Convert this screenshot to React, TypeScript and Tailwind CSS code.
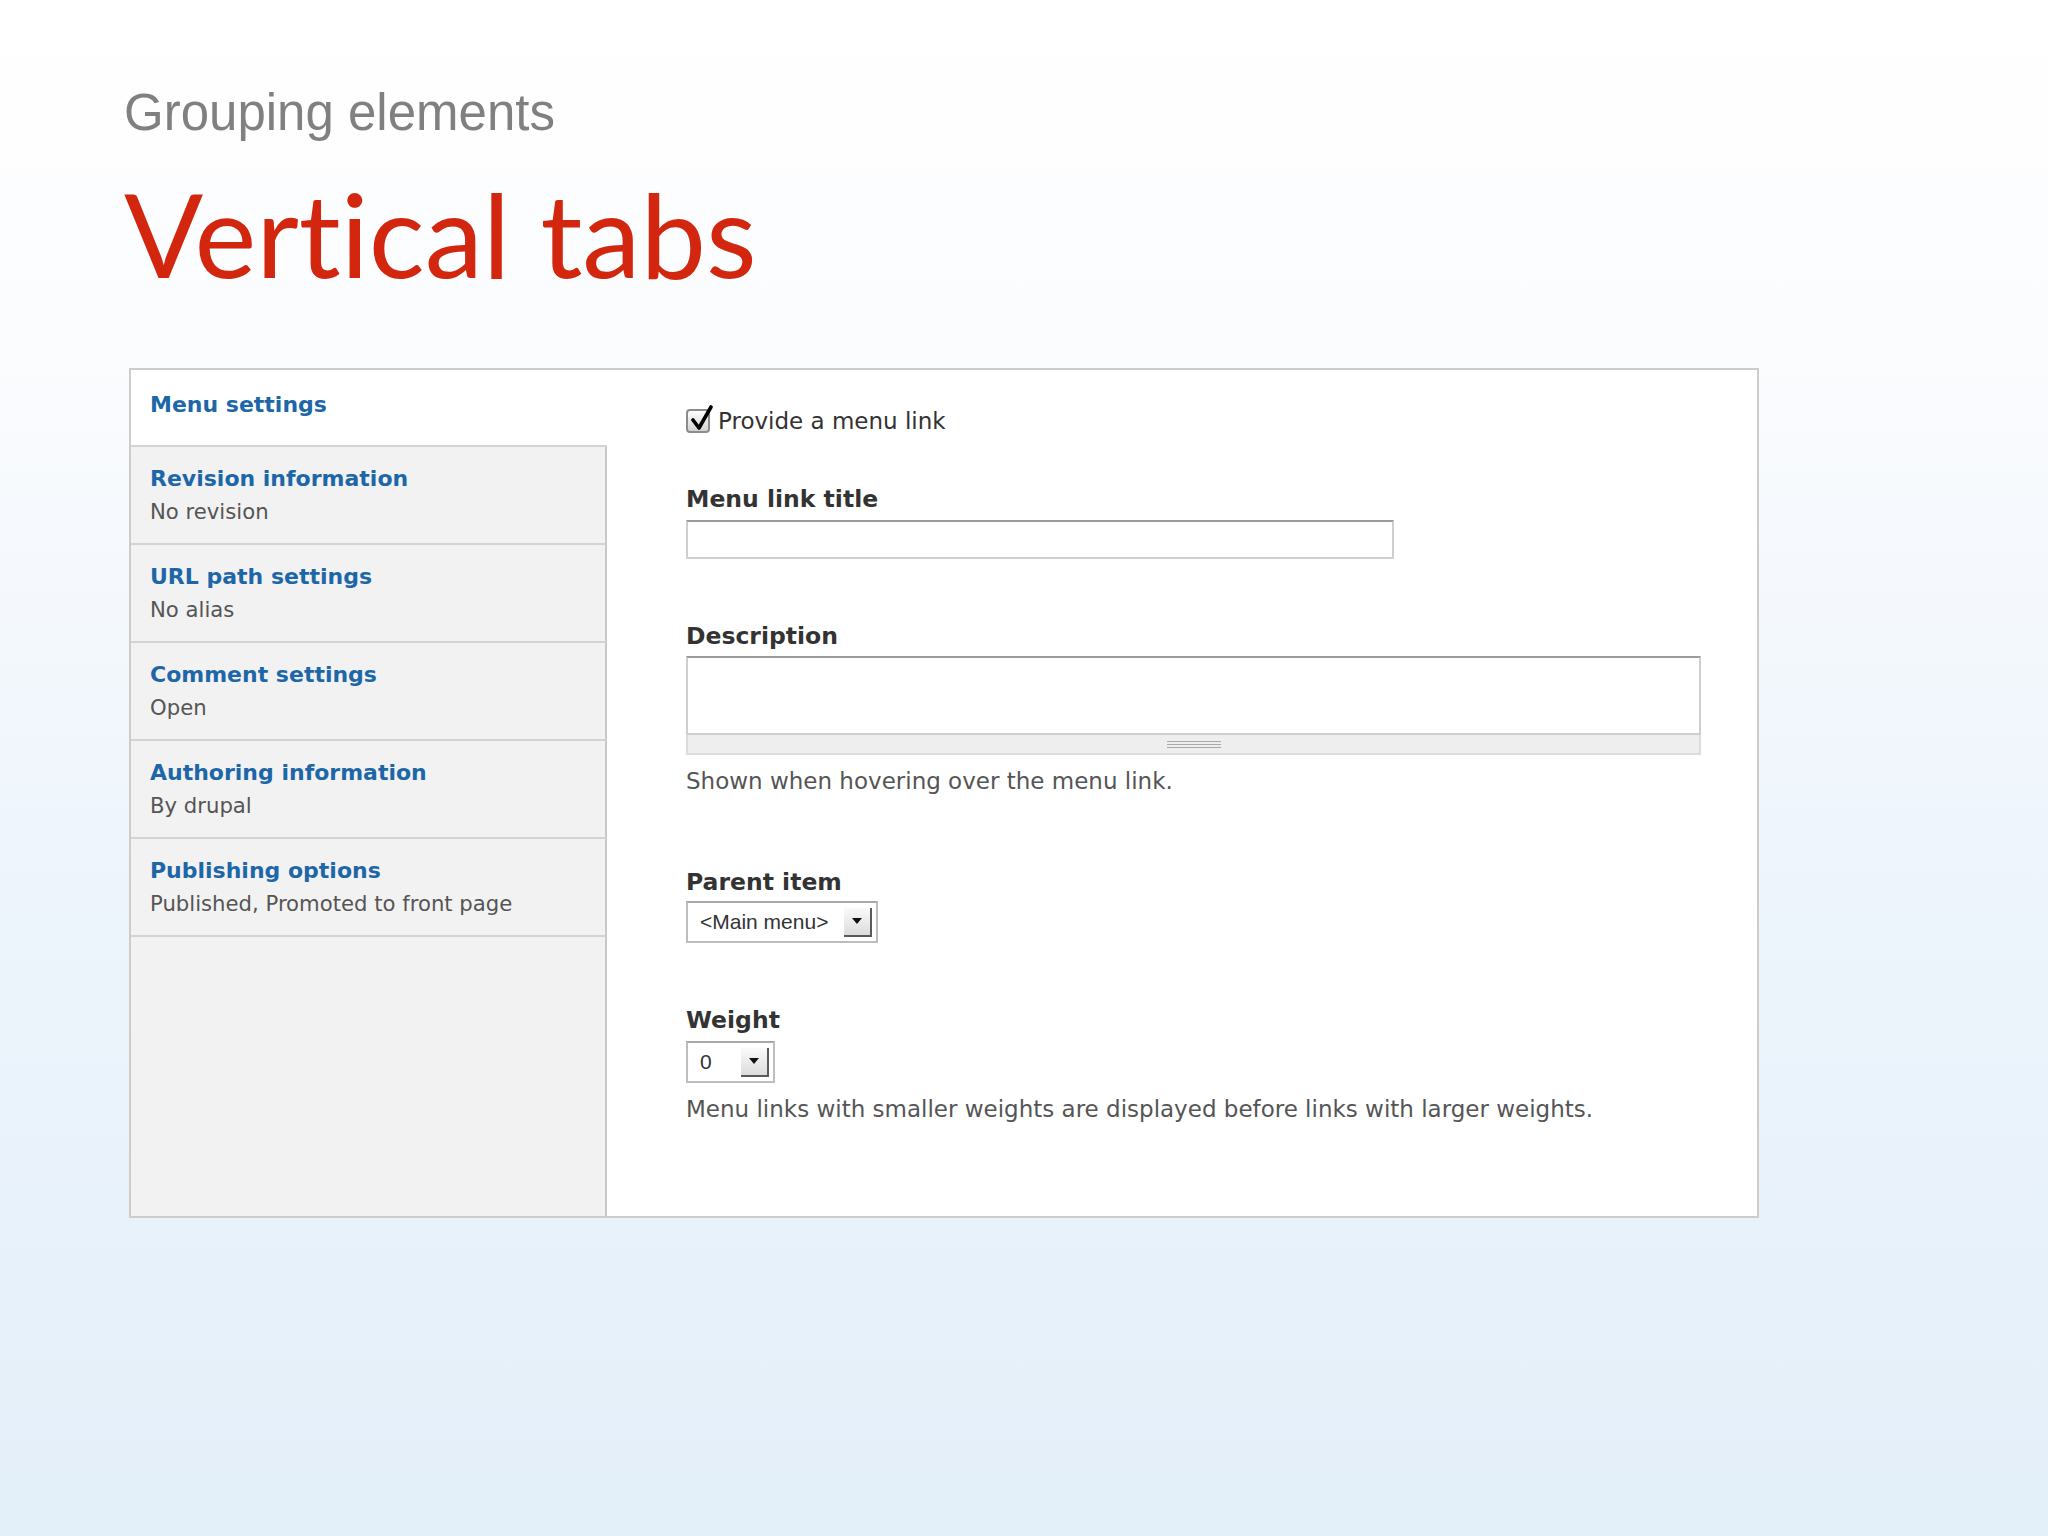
import React from "react";

const tabs = [
  { title: "Revision information", sub: "No revision" },
  { title: "URL path settings", sub: "No alias" },
  { title: "Comment settings", sub: "Open" },
  { title: "Authoring information", sub: "By drupal" },
  { title: "Publishing options", sub: "Published, Promoted to front page" },
];

function SelectBox({ label, width }: { label: string; width: string }) {
  return (
    <div
      className={`${width} h-[42px] flex items-center justify-between border-2 border-[#bdbdbd] border-t-[#a8a8a8] bg-white pl-[12px] pr-[4px]`}
    >
      <span className="font-['Liberation_Sans',Arial,sans-serif] text-[21px] text-[#333]">{label}</span>
      <span className="w-[28px] h-[29px] flex items-center justify-center bg-[linear-gradient(180deg,#fafafa_0%,#dcdcdc_100%)] border-r-2 border-b-2 border-[#5a5a5a]">
        <svg width="10" height="6" viewBox="0 0 10 6">
          <path d="M0 0H10L5 6Z" fill="#111" />
        </svg>
      </span>
    </div>
  );
}

export default function App() {
  return (
    <div className="w-[2048px] h-[1536px] bg-[linear-gradient(180deg,#ffffff_0%,#fbfcfe_22%,#eef5fc_55%,#e3eff9_100%)] pl-[124px] pt-[83px] font-['DejaVu_Sans',Verdana,sans-serif]">
      <h2 className="text-[51px] leading-[60px] text-[#808080] font-['Liberation_Sans',Arial,sans-serif]">
        Grouping elements
      </h2>
      <h1 className="mt-[31px] text-[117px] leading-[118px] text-[#d2260f] font-['Lato',sans-serif] [font-variant-ligatures:none]">
        Vertical tabs
      </h1>

      <div className="mt-[76px] ml-[5px] w-[1630px] h-[850px] border-2 border-[#cccccc] bg-white flex">
        {/* Sidebar */}
        <div className="w-[476px] flex flex-col">
          <div className="h-[77px] bg-white border-b-2 border-[#d3d3d3] pl-[19px] pt-[21px]">
            <div className="text-[22px] leading-[28px] font-bold text-[#1d67a8]">Menu settings</div>
          </div>
          {tabs.map((t) => (
            <div
              key={t.title}
              className="h-[98px] bg-[#f2f2f2] border-b-2 border-r-2 border-b-[#d3d3d3] border-r-[#c8c8c8] pl-[19px] pt-[18px]"
            >
              <div className="text-[22px] leading-[28px] font-bold text-[#1d67a8]">{t.title}</div>
              <div className="mt-[5px] text-[21.2px] leading-[28px] text-[#555]">{t.sub}</div>
            </div>
          ))}
          <div className="flex-1 bg-[#f2f2f2] border-r-2 border-[#c8c8c8]" />
        </div>

        {/* Content */}
        <div className="flex-1 pl-[79px] pt-[36px] flex flex-col items-start">
          <div className="h-[30px] flex items-center gap-[8px]">
            <span className="relative w-[24px] h-[24px] rounded-[4px] border-2 border-[#8c8c8c] bg-[linear-gradient(180deg,#ffffff_0%,#d2d2d2_100%)]">
              <svg
                className="absolute left-[1px] top-[-6px]"
                width="26"
                height="28"
                viewBox="0 0 26 28"
              >
                <path d="M4 15 L10 23 L22 2" stroke="#000" strokeWidth="3.6" fill="none" strokeLinecap="round" strokeLinejoin="round" />
              </svg>
            </span>
            <span className="text-[23px] leading-[30px] text-[#333]">Provide a menu link</span>
          </div>

          <div className="mt-[48px] text-[23.5px] leading-[30px] font-bold text-[#333]">Menu link title</div>
          <div className="mt-[6px] w-[708px] h-[39px] border-2 border-[#cfcfcf] border-t-[#9a9a9a] bg-white" />

          <div className="mt-[62px] text-[23.5px] leading-[30px] font-bold text-[#333]">Description</div>
          <div className="mt-[5px] w-[1015px] flex flex-col">
            <div className="h-[79px] border-2 border-[#cfcfcf] border-t-[#9a9a9a] bg-white" />
            <div className="h-[20px] bg-[#eeeeef] border-x-2 border-b-2 border-[#dcdcdc] flex flex-col items-center justify-center gap-[2px]">
              <div className="w-[54px] h-[1px] bg-[#a8a8a8]" />
              <div className="w-[54px] h-[1px] bg-[#a8a8a8]" />
              <div className="w-[54px] h-[1px] bg-[#a8a8a8]" />
            </div>
          </div>
          <div className="mt-[11px] text-[23px] leading-[30px] text-[#555]">Shown when hovering over the menu link.</div>

          <div className="mt-[71px] text-[23.5px] leading-[30px] font-bold text-[#333]">Parent item</div>
          <div className="mt-[4px]">
            <SelectBox label="<Main menu>" width="w-[192px]" />
          </div>

          <div className="mt-[62px] text-[23.5px] leading-[30px] font-bold text-[#333]">Weight</div>
          <div className="mt-[6px]">
            <SelectBox label="0" width="w-[89px]" />
          </div>
          <div className="mt-[11px] text-[23px] leading-[30px] text-[#555]">
            Menu links with smaller weights are displayed before links with larger weights.
          </div>
        </div>
      </div>
    </div>
  );
}
